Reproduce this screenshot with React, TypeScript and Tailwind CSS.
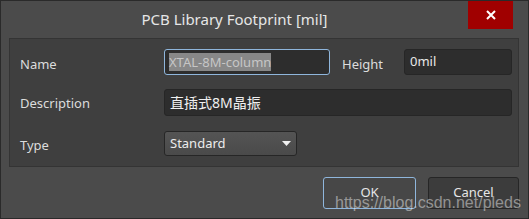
export default function App() {
  return (
    <div className="relative h-[219px] w-[529px] overflow-hidden border border-[#2a2a2a] bg-[#4b4b4b] font-['Noto_Sans','Noto_Sans_CJK_SC',sans-serif] text-[#dcdcdc]">
      <div className="flex h-[37px] items-start">
        <div className="flex h-[30px] flex-1 items-center justify-center pt-[7px] text-[15px] text-[#e6e6e6]">
          PCB Library Footprint [mil]
        </div>
        <button className="mr-[15px] flex h-[28px] w-[45px] items-center justify-center bg-[#a00000]">
          <svg width="10" height="10" viewBox="0 0 10 10">
            <path d="M1 1L9 9M9 1L1 9" stroke="#fff" strokeWidth="2" />
          </svg>
        </button>
      </div>

      <div className="ml-[8px] mr-[9px] flex flex-col gap-[14px] border border-[#343434] bg-[#3f3f3f] py-[10px] pl-[10px] pr-[6px] text-[13px]">
        <div className="flex h-[26px] items-center">
          <div className="w-[144px] pt-[5px]">Name</div>
          <div className="flex h-[26px] w-[166px] items-center rounded-[3px] border border-[#8fb6dc] bg-[#2d2d2d] px-[4px]">
            <span className="bg-[#888888] leading-[18px] text-[#c6c6c6]">XTAL-8M-column</span>
          </div>
          <div className="ml-[12px] w-[62px] pt-[5px]">Height</div>
          <div className="flex h-[26px] w-[108px] items-center rounded-[3px] border border-[#262626] bg-[#2d2d2d] px-[5px] text-[#e8e8e8]">
            0mil
          </div>
        </div>
        <div className="flex h-[27px] items-center">
          <div className="w-[144px] pt-[3px]">Description</div>
          <div className="flex h-[27px] w-[348px] items-center rounded-[3px] border border-[#262626] bg-[#2d2d2d] px-[5px] text-[14px] text-[#f0f0f0]">
            直插式8M晶振
          </div>
        </div>
        <div className="mt-px flex h-[25px] items-center">
          <div className="w-[144px] pt-[4px]">Type</div>
          <div className="flex h-[25px] w-[133px] items-center justify-between rounded-[3px] border border-[#262626] bg-gradient-to-b from-[#545454] to-[#4a4a4a] pl-[5px] pr-[5px] text-[#ececec]">
            <span>Standard</span>
            <svg width="9" height="5" viewBox="0 0 9 5">
              <path d="M0 0H9L4.5 5Z" fill="#f0f0f0" />
            </svg>
          </div>
        </div>
      </div>

      <div className="mr-[9px] mt-[10px] flex justify-end gap-[12px] text-[13px]">
        <button className="h-[32px] w-[93px] rounded-[3px] border border-[#8fb6dc] bg-[#474747] text-[#e6e6e6]">
          OK
        </button>
        <button className="h-[32px] w-[91px] rounded-[3px] border border-[#262626] bg-[#3c3c3c] text-[#e6e6e6]">
          Cancel
        </button>
      </div>

      <div className="pointer-events-none absolute left-[334px] top-[190px] font-['Liberation_Sans',sans-serif] text-[16px] text-[#ffffff]/45">
        https://blog.csdn.net/pleds
      </div>
    </div>
  );
}
